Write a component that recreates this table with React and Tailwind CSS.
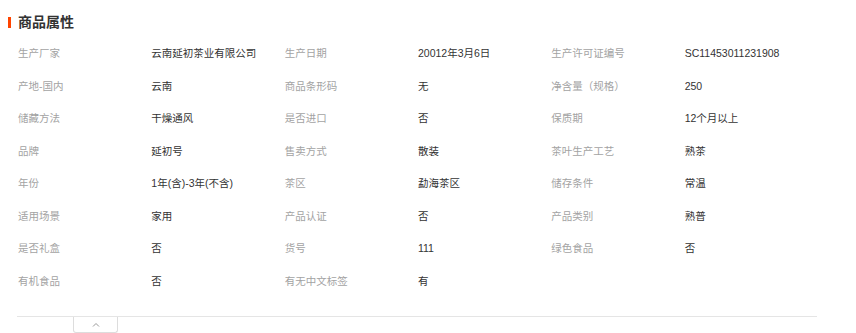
import React from 'react'

const rows = [
  ['生产厂家', '云南延初茶业有限公司', '生产日期', '20012年3月6日', '生产许可证编号', 'SC11453011231908'],
  ['产地-国内', '云南', '商品条形码', '无', '净含量（规格）', '250'],
  ['储藏方法', '干燥通风', '是否进口', '否', '保质期', '12个月以上'],
  ['品牌', '延初号', '售卖方式', '散装', '茶叶生产工艺', '熟茶'],
  ['年份', '1年(含)-3年(不含)', '茶区', '勐海茶区', '储存条件', '常温'],
  ['适用场景', '家用', '产品认证', '否', '产品类别', '熟普'],
  ['是否礼盒', '否', '货号', '111', '绿色食品', '否'],
  ['有机食品', '否', '有无中文标签', '有'],
]

export default function App() {
  return (
    <div
      className="w-[856px] h-[333px] bg-white overflow-hidden"
      style={{ fontFamily: '"Liberation Sans", "Noto Sans CJK SC", sans-serif' }}
    >
      {/* 标题 */}
      <div className="flex items-center h-[37px] pt-[7px] pl-[8px]">
        <span className="w-[3px] h-[11px] bg-[#ff4400]" />
        <span className="ml-[7px] text-[14px] font-bold text-[#333] leading-none">商品属性</span>
      </div>

      {/* 属性表 */}
      <div className="ml-[17px] w-[800px]">
        {rows.map((row, i) => (
          <div key={i} className="grid grid-cols-6 h-[32.57px] items-center text-[10.5px] leading-none">
            {row.map((cell, j) => (
              <span
                key={j}
                className={j % 2 === 0 ? 'pl-[1px] text-[#a3a3a3]' : 'pl-[1px] text-[#333]'}
              >
                {cell}
              </span>
            ))}
          </div>
        ))}
      </div>

      {/* 收起 */}
      <div className="ml-[17px] w-[800px] mt-[18px] border-t border-[#e5e5e5]">
        <button className="ml-[56px] w-[45px] h-[16px] border border-t-0 border-[#ddd] rounded-b-[3px] flex items-center justify-center">
          <svg width="8" height="5" viewBox="0 0 8 5" fill="none">
            <path d="M1 4.5L4 1.5L7 4.5" stroke="#999" strokeWidth="1" />
          </svg>
        </button>
      </div>
    </div>
  )
}
